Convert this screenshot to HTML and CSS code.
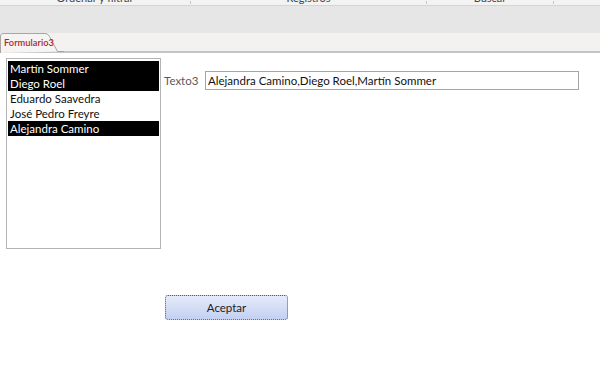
FILE: index.html
```html
<!DOCTYPE html>
<html lang="es">
<head>
    <meta charset="UTF-8">
    <title>Formulario3</title>
    <link rel="stylesheet" href="styles.css">
</head>
<body>

<div class="ribbon">
    <div class="group g1"><span>Ordenar y filtrar</span></div>
    <div class="group g2"><span>Registros</span></div>
    <div class="group g3"><span>Buscar</span></div>
    <div class="group g4"></div>
</div>

<div class="toolbar"></div>

<div class="tabs">
    <div class="tab">
        <svg class="tab-shape" width="64" height="20" viewBox="0 0 64 20">
            <path d="M0.5 20 V3 Q0.5 0.5 3 0.5 H45 Q48 0.5 49.5 3.5 L57.5 18.5 H64" fill="#f5f4f3" stroke="#a9a5a1" stroke-width="1"/>
        </svg>
        <span class="tab-label">Formulario3</span>
    </div>
</div>

<div class="form">
    <div class="top-row">
        <ul class="listbox">
            <li class="selected">Martín Sommer</li>
            <li class="selected">Diego Roel</li>
            <li>Eduardo Saavedra</li>
            <li>José Pedro Freyre</li>
            <li class="selected">Alejandra Camino</li>
        </ul>

        <div class="field">
            <label for="texto3">Texto3</label>
            <input type="text" id="texto3" value="Alejandra Camino,Diego Roel,Martín Sommer" readonly>
        </div>
    </div>

    <button type="button" class="accept">Aceptar</button>
</div>

</body>
</html>
```

FILE: styles.css
```css
body {
    margin: 0;
    font-family: Lato, "Open Sans", sans-serif;
    font-size: 11.5px;
    background-color: #fff;
    color: #111;
}

/* ribbon, cut off at the top */
.ribbon {
    display: flex;
    height: 5px;
    overflow: hidden;
    background-color: #f3f3f3;
    border-bottom: 1px solid #d4d4d4;
}

.ribbon .group {
    text-align: center;
    border-right: 1px solid #c8c8c8;
    height: 3px;
    margin-top: 1px;
}

.ribbon .group span {
    display: block;
    margin-top: -9px;
    font-size: 11px;
    line-height: 12px;
    color: #444;
    white-space: nowrap;
}

.ribbon .g1 { width: 190px; }
.ribbon .g2 { width: 235px; }
.ribbon .g3 { width: 126px; }
.ribbon .g4 { flex: 1; border-right: none; }

.toolbar {
    height: 27px;
    background-color: #e6e6e6;
}

.tabs {
    height: 18px;
    background-color: #f3f2f1;
    border-bottom: 2px solid #c4c4c4;
}

.tab {
    position: relative;
    width: 64px;
    height: 20px;
}

.tab-shape {
    position: absolute;
    top: 0;
    left: 0;
}

.tab-label {
    position: relative;
    display: block;
    padding-left: 4px;
    color: #b3252c;
    font-size: 9.3px;
    font-weight: 600;
    line-height: 20px;
    white-space: nowrap;
}

.form {
    padding: 5px 6px;
}

.top-row {
    display: flex;
    align-items: flex-start;
}

.listbox {
    list-style: none;
    margin: 0;
    padding: 2px 1px;
    width: 151px;
    height: 185px;
    border: 1px solid #b4b4b4;
}

.listbox li {
    height: 15px;
    line-height: 15px;
    padding-left: 2px;
    white-space: nowrap;
}

.listbox li.selected {
    background-color: #000;
    color: #fff;
}

.field {
    display: flex;
    align-items: center;
    margin-top: 13px;
    margin-left: 3px;
}

.field label {
    width: 41px;
    color: #595959;
}

.field input {
    width: 374px;
    height: 19px;
    box-sizing: border-box;
    margin: 0;
    padding: 0 2px;
    border: 1px solid #a6a6a6;
    font-family: inherit;
    font-size: 11.5px;
    color: #111;
    outline: none;
}

.accept {
    display: block;
    margin: 46px 0 0 159px;
    width: 123px;
    height: 25px;
    border: 1px dotted #4d5a86;
    border-radius: 3px;
    background: linear-gradient(#e5ebfa, #c4d0f1);
    font-family: inherit;
    font-size: 11.5px;
    color: #222;
}
```
